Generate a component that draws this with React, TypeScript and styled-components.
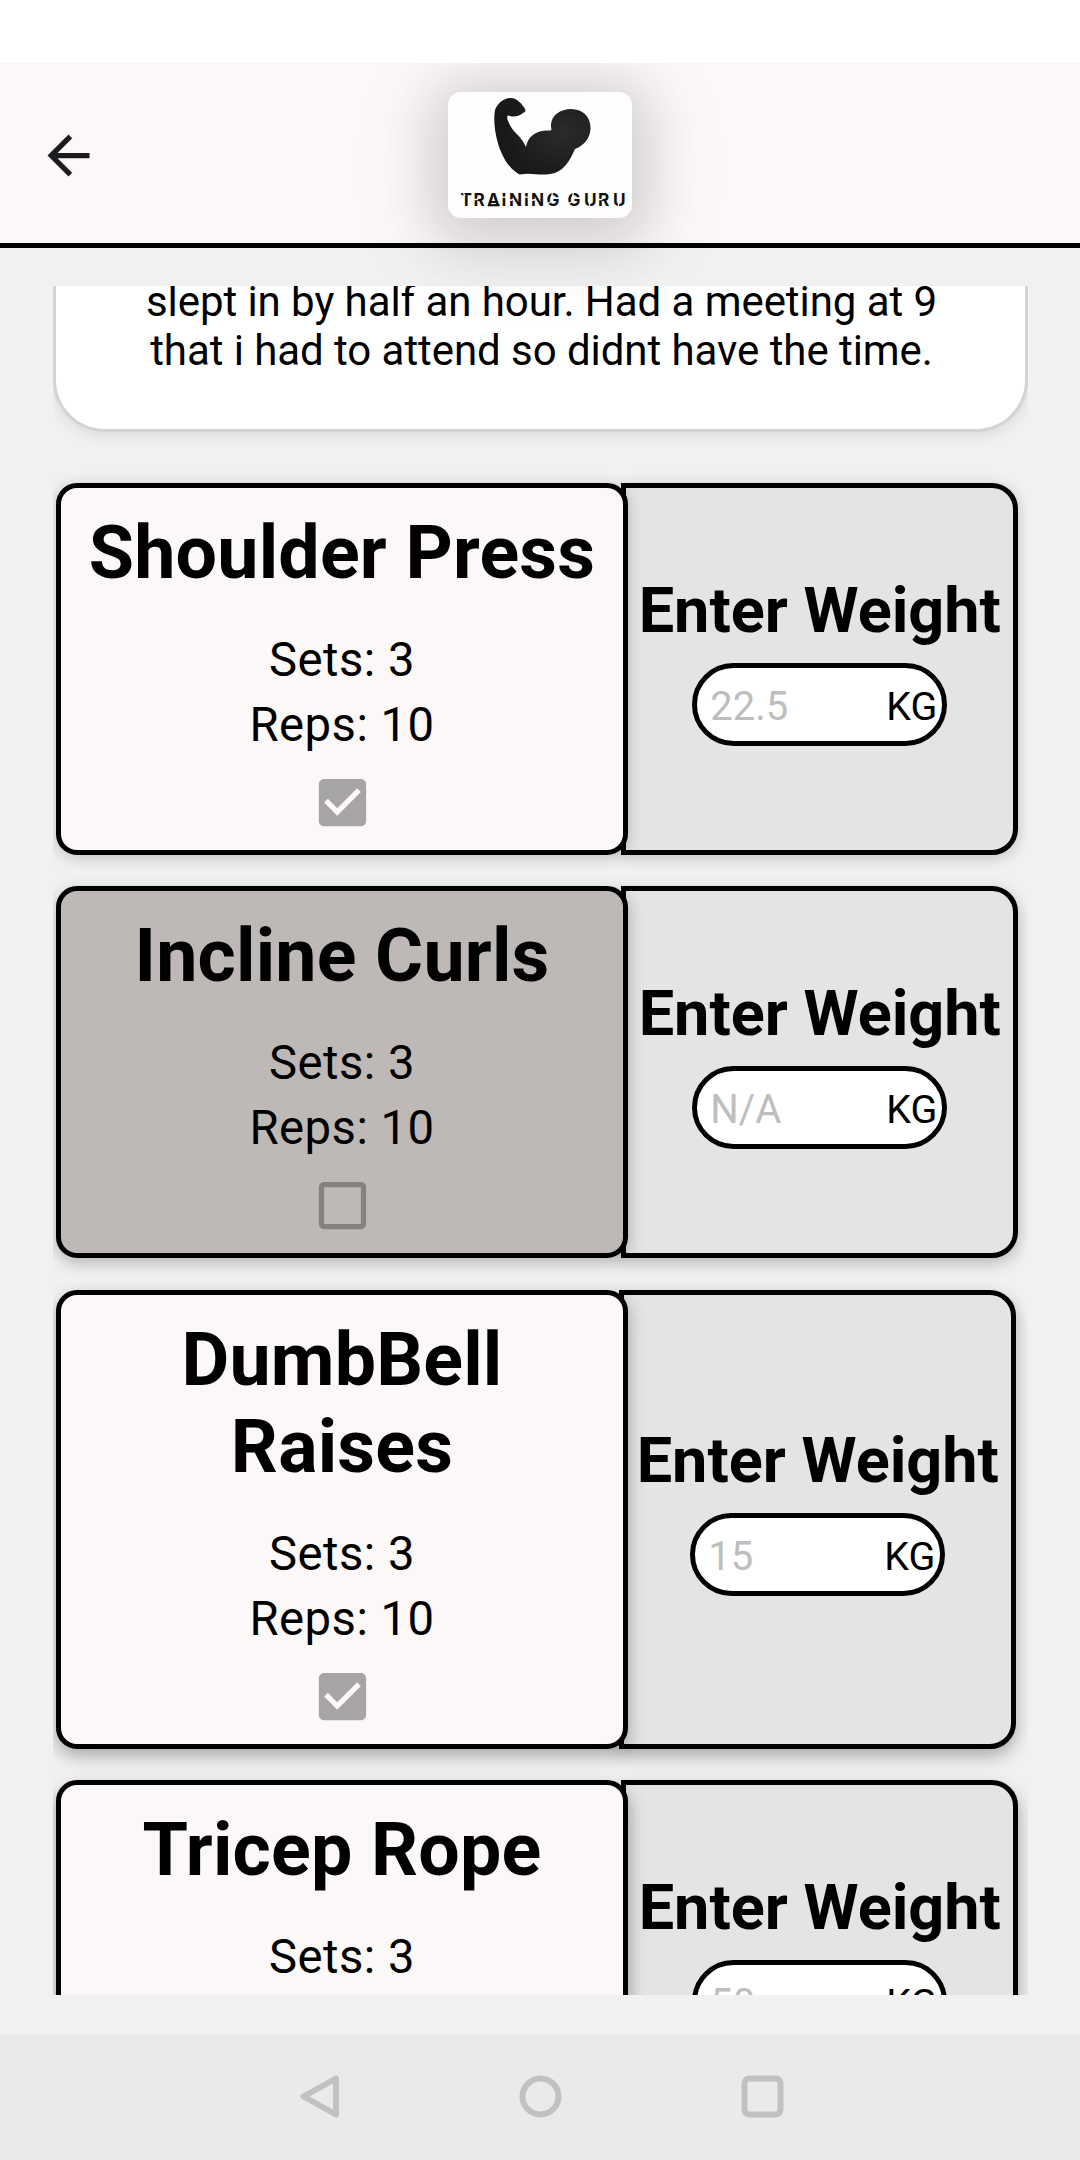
import React from "react";
import styled, { createGlobalStyle } from "styled-components";

const GlobalStyle = createGlobalStyle`
  *, *::before, *::after { box-sizing: border-box; }
  html, body { margin: 0; background: #f1f1f1; }
  body { font-family: Roboto, "Liberation Sans", sans-serif; color: #000; }
`;

const Screen = styled.div`
  width: 1080px;
  height: 2160px;
  display: flex;
  flex-direction: column;
  overflow: hidden;
  background: #f1f1f1;
`;

const StatusBar = styled.div`
  height: 63px;
  flex: none;
  background: #fff;
  position: relative;
  z-index: 3;
`;

const Header = styled.header`
  height: 184.7px;
  flex: none;
  display: grid;
  grid-template-columns: 1fr auto 1fr;
  align-items: center;
  padding: 0 37px;
  background: #fcf8f7;
  border-bottom: 5.25px solid #000;
  position: relative;
  z-index: 2;
`;

const BackButton = styled.button`
  width: 63px;
  height: 63px;
  margin-top: 6px;
  padding: 0;
  border: 0;
  background: none;
  svg { display: block; }
`;

const LogoCard = styled.div`
  width: 184px;
  height: 126px;
  margin-top: 5px;
  border-radius: 13px;
  background: #fefefe;
  box-shadow: 0 8px 48px 18px rgba(0, 0, 0, 0.11), 0 14px 90px 22px rgba(0, 0, 0, 0.07);
  svg { display: block; }
`;

const ScrollArea = styled.main`
  flex: none;
  width: 975px;
  height: 1709px;
  margin: 38.3px auto 39px 52.5px;
  overflow: hidden;
  display: flex;
  flex-direction: column;
`;

const NoteCard = styled.section`
  flex: none;
  height: 145.700px;
  display: flex;
  flex-direction: column;
  justify-content: flex-end;
  padding: 0 0 54px 3px;
  background: #fff;
  border: 3px solid #d3d3d3;
  border-top: 0;
  border-radius: 0 0 52px 52px;
  box-shadow: 0 4px 14px rgba(0, 0, 0, 0.09);
  font-size: 42px;
  line-height: 49px;
  letter-spacing: -0.06px;
  text-align: center;
`;

const NoteLine = styled.span`
  display: block;
  white-space: nowrap;
`;

const List = styled.div`
  flex: none;
  display: flex;
  flex-direction: column;
  gap: 31.5px;
  margin-top: 51.3px;
  padding-left: 3.5px;
`;

const Row = styled.article<{ $depth: number }>`
  display: flex;
  align-items: stretch;
  --shadow: 0 ${(p) => 3 + p.$depth * 2}px ${(p) => 15 + p.$depth}px rgba(0, 0, 0, ${(p) => 0.2 + p.$depth * 0.05});
`;

const Exercise = styled.div<{ $done: boolean }>`
  position: relative;
  z-index: 1;
  width: 572px;
  flex: none;
  display: flex;
  flex-direction: column;
  align-items: center;
  padding: 22px 15px 16px;
  border: 5.25px solid #000;
  border-radius: 21px;
  background: ${(p) => (p.$done ? "#fcf8f7" : "#beb8b7")};
  box-shadow: var(--shadow);
`;

const Title = styled.h2`
  margin: 0 0 30.5px;
  font-size: 73.5px;
  line-height: 87.2px;
  font-weight: 700;
  letter-spacing: 0.2px;
  text-align: center;
`;

const Stat = styled.p`
  margin: 0;
  font-size: 47.25px;
  line-height: 65px;
  letter-spacing: 0.45px;
`;

const CheckSlot = styled.div`
  height: 63px;
  margin-top: 13.2px;
  svg { display: block; }
`;

const WeightPanel = styled.div<{ $shift: number }>`
  width: 397px;
  flex: none;
  margin-left: ${(p) => -7 - p.$shift}px;
  display: flex;
  flex-direction: column;
  align-items: center;
  justify-content: center;
  padding: 0 0 18px 0.6px;
  border: 5.25px solid #000;
  border-radius: 0 26px 26px 0;
  background: #e4e4e4;
  box-shadow: var(--shadow);
`;

const WeightLabel = styled.h3`
  margin: 0 -10px 15px;
  font-size: 63px;
  line-height: 74px;
  font-weight: 700;
  white-space: nowrap;
`;

const WeightField = styled.div`
  width: 255px;
  height: 83px;
  display: flex;
  align-items: center;
  justify-content: space-between;
  padding: 5px 5px 0 13px;
  border: 5.25px solid #000;
  border-radius: 42px;
  background: #fff;
`;

const Placeholder = styled.span`
  font-size: 40px;
  line-height: 48px;
  color: #bebebe;
`;

const Unit = styled.span`
  font-size: 39.4px;
  line-height: 48px;
`;

const NavBar = styled.nav`
  flex: 1;
  display: flex;
  justify-content: center;
  align-items: center;
  gap: 159px;
  background: #eaeaea;
  svg { display: block; }
`;

const BackArrow = () => (
  <svg width="63" height="63" viewBox="0 0 24 24" fill="#1c1b1f">
    <path d="M20 11H7.83l5.59-5.59L12 4l-8 8 8 8 1.41-1.41L7.83 13H20v-2z" />
  </svg>
);

const Logo = () => (
  <svg width="184" height="126" viewBox="0 0 184 126">
    <defs>
      <radialGradient id="armTone" cx="0.72" cy="0.45" r="0.6">
        <stop offset="0" stopColor="#2b2b2b" />
        <stop offset="1" stopColor="#191919" />
      </radialGradient>
    </defs>
    <path
      fill="url(#armTone)"
      d="M47 18C50 10 57 6 63 6C69 6 74 12 77 17C78 19 77 20 75 21C70 25 66 25 62 24C59 22 58 25 61 31C64 40 73 43 78 55C80 45 87 38 101 38.500C103 39 104 38 103 35C102 24 112 17 123 17C136 17 143 26 142.500 37C142 47 135 54 127 57C121 71 114 82 98 82.500C89 83 82 80.500 72 82.500C70 82 60 76 54 62C47 47 45 28 47 18Z"
    />
    <text
      x="12.500 25.500 39 53.500 61 76 83 98.500 112 119.500 136 150 165"
      y="114.300"
      fontFamily="Inter, 'Liberation Sans', sans-serif"
      fontSize="17.200"
      fontWeight="700"
      fill="#111"
    >
      TRAINING GURU
    </text>
    {/* base bar that closes the A, then the stencil cuts */}
    <path d="M40 113.200H51.500" stroke="#111" strokeWidth="2.200" />
    <path
      d="M54 105.200h5M76 105.200h5M15.500 101l1.500 3M61 108.500l5 -1M83 108.500l5 -1M26 107.500h4M104.500 101l-1 4M125.500 101l-1 4M99 112l4 -2.500M120 112l4 -2.500M141.500 111v4M150.500 107.500h4M170.500 111v4"
      stroke="#fefefe"
      strokeWidth="1.300"
    />
  </svg>
);

const CheckIcon = ({ checked }: { checked: boolean }) => (
  <svg width="63" height="63" viewBox="0 0 24 24" fill={checked ? "#a7a4a4" : "#848180"}>
    {checked ? (
      <path d="M19 3H5c-1.110 0-2 .9-2 2v14c0 1.100.89 2 2 2h14c1.110 0 2-.9 2-2V5c0-1.100-.89-2-2-2zm-9 14l-5-5 1.410-1.410L10 14.170l7.590-7.590L19 8l-9 9z" />
    ) : (
      <path d="M19 5v14H5V5h14m0-2H5c-1.100 0-2 .9-2 2v14c0 1.100.9 2 2 2h14c1.100 0 2-.9 2-2V5c0-1.100-.9-2-2-2z" />
    )}
  </svg>
);

const NavIcon = ({ children }: { children: React.ReactNode }) => (
  <svg width="63" height="63" viewBox="0 0 63 63" fill="none" stroke="#c1c1c1" strokeWidth="6" strokeLinejoin="round">
    {children}
  </svg>
);

interface Item {
  name: string;
  sets: number;
  reps: number;
  done: boolean;
  weight: string;
  shift: number;
}

const items: Item[] = [
  { name: "Shoulder Press", sets: 3, reps: 10, done: true, weight: "22.5", shift: 0 },
  { name: "Incline Curls", sets: 3, reps: 10, done: false, weight: "N/A", shift: 0 },
  { name: "DumbBell Raises", sets: 3, reps: 10, done: true, weight: "15", shift: 2 },
  { name: "Tricep Rope", sets: 3, reps: 10, done: true, weight: "50", shift: 0 },
];

export default function App() {
  return (
    <Screen>
      <GlobalStyle />
      <StatusBar />
      <Header>
        <BackButton aria-label="Back">
          <BackArrow />
        </BackButton>
        <LogoCard>
          <Logo />
        </LogoCard>
      </Header>
      <ScrollArea>
        <NoteCard>
          <NoteLine>slept in by half an hour. Had a meeting at 9</NoteLine>
          <NoteLine>that i had to attend so didnt have the time.</NoteLine>
        </NoteCard>
        <List>
          {items.map((item, i) => (
            <Row key={item.name} $depth={i}>
              <Exercise $done={item.done}>
                <Title>{item.name}</Title>
                <Stat>Sets: {item.sets}</Stat>
                <Stat>Reps: {item.reps}</Stat>
                <CheckSlot>
                  <CheckIcon checked={item.done} />
                </CheckSlot>
              </Exercise>
              <WeightPanel $shift={item.shift}>
                <WeightLabel>Enter Weight</WeightLabel>
                <WeightField>
                  <Placeholder>{item.weight}</Placeholder>
                  <Unit>KG</Unit>
                </WeightField>
              </WeightPanel>
            </Row>
          ))}
        </List>
      </ScrollArea>
      <NavBar>
        <NavIcon>
          <path d="M49 13.500 L49 49.500 L16.500 31.500 Z" />
        </NavIcon>
        <NavIcon>
          <circle cx="31.500" cy="31.500" r="18" />
        </NavIcon>
        <NavIcon>
          <rect x="13.500" y="13.500" width="36" height="36" rx="5" />
        </NavIcon>
      </NavBar>
    </Screen>
  );
}
